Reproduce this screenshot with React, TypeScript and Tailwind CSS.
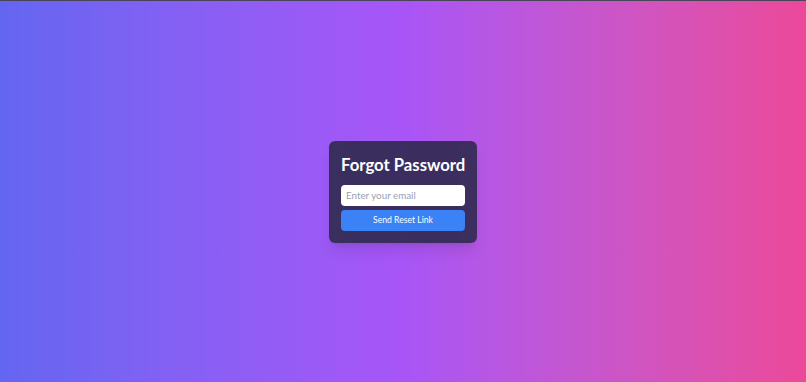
export default function App() {
  return (
    <div className="flex min-h-screen items-center justify-center border-t border-[#4a4458] bg-gradient-to-r from-[#6366f1] via-[#a855f7] to-[#ec4899] font-['Lato','Open_Sans',sans-serif]">
      <div className="w-[148px] rounded-md bg-[#2f2a4f]/90 px-3 pt-2.5 pb-3 shadow-lg">
        <h1 className="mb-1.5 whitespace-nowrap text-center text-[16.7px] leading-[28px] font-bold text-white">
          Forgot Password
        </h1>
        <input
          type="email"
          placeholder="Enter your email"
          className="block h-[21px] w-full rounded-sm bg-white px-[5px] text-[9.8px] text-gray-700 outline-none placeholder:text-gray-400"
        />
        <button className="mt-1 block h-[21px] w-full rounded bg-[#3b82f6] text-[8.6px] text-white">
          Send Reset Link
        </button>
      </div>
    </div>
  );
}
